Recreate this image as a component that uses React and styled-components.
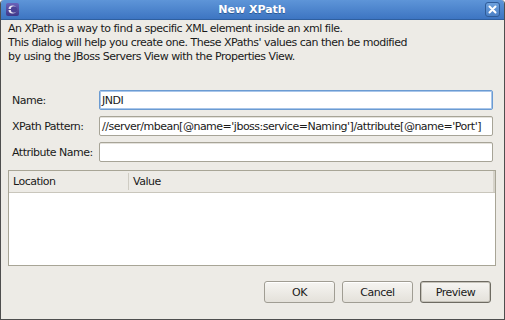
import styled, { createGlobalStyle } from "styled-components";

const GlobalStyle = createGlobalStyle`
  html, body {
    margin: 0;
    padding: 0;
    background: #ffffff;
  }
  * {
    box-sizing: border-box;
  }
`;

const fields = [
  { id: "name", label: "Name:", value: "JNDI", focused: true },
  {
    id: "pattern",
    label: "XPath Pattern:",
    value: "//server/mbean[@name='jboss:service=Naming']/attribute[@name='Port']",
  },
  { id: "attr", label: "Attribute Name:", value: "" },
];

const buttons = [
  { id: "ok", label: "OK" },
  { id: "cancel", label: "Cancel" },
  { id: "preview", label: "Preview", isDefault: true },
];

const Window = styled.div`
  width: 505px;
  height: 320px;
  display: flex;
  flex-direction: column;
  background: #edebe6;
  border: 1px solid #4e4e4e;
  border-top: none;
  border-radius: 4px 4px 0 0;
  overflow: hidden;
  font-family: "DejaVu Sans", "Noto Sans", sans-serif;
  font-size: 11px;
  letter-spacing: -0.5px;
  color: #1a1a1a;
`;

const TitleBar = styled.div`
  height: 20px;
  flex: none;
  display: flex;
  align-items: center;
  padding: 0 4px 0 5px;
  background: linear-gradient(#5e95d8, #3d75c2);
  border-bottom: 1px solid #2f5f9f;
`;

const AppIcon = styled.div`
  width: 13px;
  height: 13px;
  border-radius: 2px;
  background: linear-gradient(#6a62b8, #3f3789);
  display: flex;
  align-items: center;
  justify-content: center;
`;

const Title = styled.div`
  flex: 1;
  text-align: center;
  color: #ffffff;
  font-weight: bold;
  font-size: 11px;
  letter-spacing: 0;
  text-shadow: 0 1px 0 #2d5a94;
`;

const CloseButton = styled.div`
  width: 15px;
  height: 15px;
  border: 1px solid #2f5c98;
  border-radius: 3px;
  background: linear-gradient(#6da0dc, #4a80c6);
  display: flex;
  align-items: center;
  justify-content: center;
`;

const Body = styled.div`
  flex: 1;
  display: flex;
  flex-direction: column;
  padding: 2px 7px 0 7px;
`;

const Intro = styled.p`
  margin: 0;
  line-height: 14px;
`;

const Form = styled.div`
  margin-top: 26px;
  display: grid;
  grid-template-columns: 87px 1fr;
  row-gap: 6px;
  align-items: center;
  padding-left: 4px;
  padding-right: 4px;
`;

const Label = styled.label`
  white-space: nowrap;
`;

const Input = styled.div`
  height: 20px;
  display: flex;
  align-items: center;
  padding: 0 2px;
  background: #ffffff;
  border: 1px solid ${({ $focused }) => ($focused ? "#6b9bd2" : "#a7a497")};
  border-radius: 2px;
  box-shadow: ${({ $focused }) =>
    $focused ? "inset 0 0 0 1px #a9c6ea" : "inset 0 1px 0 #e4e2dc"};
  white-space: nowrap;
  overflow: hidden;
`;

const Table = styled.div`
  margin-top: 8px;
  height: 96px;
  display: flex;
  flex-direction: column;
  border: 1px solid #a8a596;
  background: #ffffff;
  margin-right: 1px;
`;

const TableHeader = styled.div`
  height: 22px;
  flex: none;
  display: grid;
  grid-template-columns: 120px 1fr;
  background: #edebe6;
  border-bottom: 1px solid #c9c6bc;
  box-shadow: inset -2px 0 0 #d6d3ca;
`;

const HeaderCell = styled.div`
  display: flex;
  align-items: center;
  padding-left: 4px;
  border-right: ${({ $last }) => ($last ? "none" : "1px solid #cfccc3")};
  margin: 2px 0;
`;

const ButtonRow = styled.div`
  margin-top: 15px;
  display: flex;
  justify-content: flex-end;
  gap: 7px;
  padding-right: 6px;
`;

const Button = styled.div`
  width: 71px;
  height: 22px;
  display: flex;
  align-items: center;
  justify-content: center;
  border: 1px solid ${({ $default }) => ($default ? "#6e6b62" : "#a09d93")};
  box-shadow: ${({ $default }) =>
    $default ? "inset 0 0 0 1px #c6c3ba" : "inset 0 1px 0 #ffffff"};
  border-radius: 3px;
  background: linear-gradient(#f6f5f2, #e4e1da);
`;

export default function App() {
  return (
    <>
      <GlobalStyle />
      <Window>
        <TitleBar>
          <AppIcon>
            <svg width="9" height="9" viewBox="0 0 9 9">
              <circle cx="4.5" cy="4.5" r="4" fill="#e8e6f4" />
              <circle cx="6" cy="4.5" r="3.2" fill="#4a4296" />
              <rect x="0" y="4" width="6" height="1" fill="#4a4296" />
            </svg>
          </AppIcon>
          <Title>New XPath</Title>
          <CloseButton>
            <svg width="9" height="9" viewBox="0 0 9 9">
              <path
                d="M1.5 1.5 L7.5 7.5 M7.5 1.5 L1.5 7.5"
                stroke="#ffffff"
                strokeWidth="2"
                strokeLinecap="round"
              />
            </svg>
          </CloseButton>
        </TitleBar>
        <Body>
          <Intro>
            An XPath is a way to find a specific XML element inside an xml file.
            <br />
            This dialog will help you create one. These XPaths' values can then be
            modified
            <br />
            by using the JBoss Servers View with the Properties View.
          </Intro>
          <Form>
            {fields.map((field) => [
              <Label key={field.id + "-l"}>{field.label}</Label>,
              <Input key={field.id} $focused={field.focused}>
                {field.value}
              </Input>,
            ])}
          </Form>
          <Table>
            <TableHeader>
              <HeaderCell>Location</HeaderCell>
              <HeaderCell $last>Value</HeaderCell>
            </TableHeader>
          </Table>
          <ButtonRow>
            {buttons.map((b) => (
              <Button key={b.id} $default={b.isDefault}>
                {b.label}
              </Button>
            ))}
          </ButtonRow>
        </Body>
      </Window>
    </>
  );
}
